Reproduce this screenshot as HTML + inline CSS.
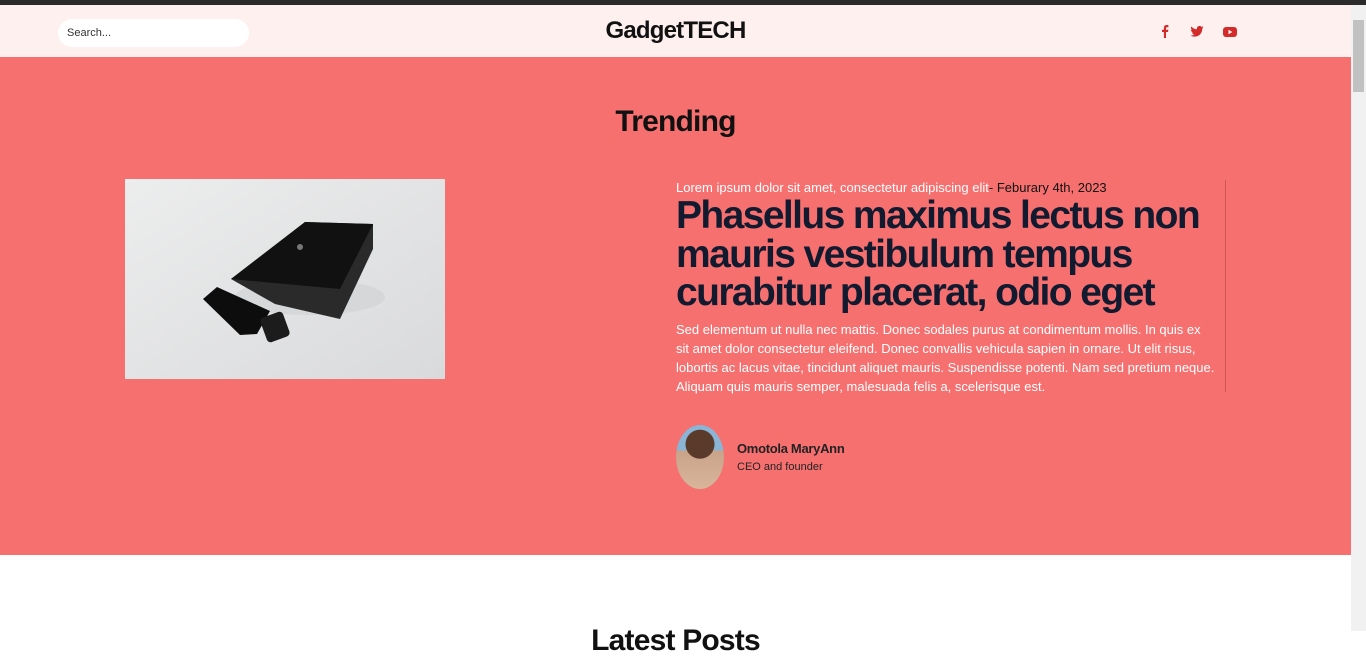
<!DOCTYPE html>
<html><head><meta charset="utf-8"><style>
*{margin:0;padding:0;box-sizing:border-box}
html,body{width:1366px;height:631px;overflow:hidden;background:#fff;font-family:"Liberation Sans",sans-serif}
.top{position:absolute;left:0;top:0;width:1366px;height:5px;background:#2b2b2b}
.hdr{position:absolute;left:0;top:5px;width:1351px;height:52px;background:#fff0f0}
.search{position:absolute;left:58px;top:14px;width:191px;height:28px;background:#fff;border-radius:14px;font-size:11px;color:#333;padding:8px 0 0 9px}
.logo{position:absolute;left:0;width:1351px;top:12px;text-align:center;font-size:24px;font-weight:bold;color:#111;letter-spacing:-0.8px}
.ic{position:absolute;top:20px}
.main{position:absolute;left:0;top:57px;width:1351px;height:498px;background:#f77070}
.tr{position:absolute;top:48px;width:1351px;text-align:center;font-size:30px;font-weight:bold;color:#111;letter-spacing:-0.8px}
.img{position:absolute;left:125px;top:122px;width:320px;height:200px}
.txt{position:absolute;left:676px;top:123px;width:550px;border-right:1px solid #c55;height:212px;white-space:nowrap}
.meta{font-size:13px;color:#fff;letter-spacing:0}
.meta span{color:#111}
h1{font-size:39px;line-height:38.5px;color:#111a2e;letter-spacing:-1.6px;margin-top:2px;font-weight:bold}
p{font-size:13px;line-height:19px;color:#fff;margin-top:7px;letter-spacing:0}
.av{position:absolute;left:676px;top:368px;width:48px;height:64px;border-radius:50%;background:radial-gradient(circle at 50% 30%,#5a3a2a 0 28%,transparent 29%),linear-gradient(#8ab5d6 0 40%,#c9a28a 40%,#d8b69a)}
.nm{position:absolute;left:737px;top:384px;font-size:13px;font-weight:bold;color:#222;letter-spacing:-0.3px}
.rl{position:absolute;left:737px;top:404px;font-size:11px;color:#222}
.sb{position:absolute;left:1351px;top:5px;width:15px;height:626px;background:#f1f1f1}
.th{position:absolute;left:1353px;top:20px;width:11px;height:72px;background:#c1c1c1}
.lp{position:absolute;top:624px;width:1351px;text-align:center;font-size:30px;font-weight:bold;color:#111;letter-spacing:-0.8px}
</style></head><body>
<div class="top"></div>
<div class="hdr">
<div class="search">Search...</div>
<div class="logo">GadgetTECH</div>
<svg class="ic" style="left:1161px" width="8" height="13" viewBox="0 0 8 13"><path d="M5 13V7h2l.4-2.3H5V3.3c0-.6.2-1 1-1h1.4V.2C7 .1 6.4 0 5.7 0 4 0 2.9 1 2.9 2.9v1.8H1V7h1.9v6z" fill="#d32a2a"/></svg>
<svg class="ic" style="left:1190px;top:21px" width="14" height="11" viewBox="0 0 24 20"><path d="M24 2.4a10 10 0 0 1-2.8.8A5 5 0 0 0 23.3.4a10 10 0 0 1-3.1 1.2A4.9 4.9 0 0 0 11.8 6 14 14 0 0 1 1.7.9a4.9 4.9 0 0 0 1.5 6.6A4.9 4.9 0 0 1 1 6.9a4.9 4.9 0 0 0 3.900 4.8 5 5 0 0 1-2.2.1 4.9 4.9 0 0 0 4.6 3.4A9.9 9.9 0 0 1 0 17.2 14 14 0 0 0 7.5 19.4c9.1 0 14-7.5 14-14v-.6A10 10 0 0 0 24 2.4z" fill="#d32a2a"/></svg>
<svg class="ic" style="left:1223px;top:22px" width="14" height="10" viewBox="0 0 14 10"><rect width="14" height="10" rx="3" fill="#d32a2a"/><path d="M5.5 2.8v4.4L9.3 5z" fill="#fff"/></svg>
</div>
<div class="main">
<div class="tr">Trending</div>
<svg class="img" viewBox="0 0 320 200"><defs><linearGradient id="g" x1="0" y1="0" x2="1" y2="1"><stop offset="0" stop-color="#eceded"/><stop offset="1" stop-color="#d9dadc"/></linearGradient></defs>
<rect width="320" height="200" fill="url(#g)"/>
<ellipse cx="185" cy="118" rx="75" ry="18" fill="#cfd0d2" opacity=".6"/>
<polygon points="180,43 248,45 248,70 215,140 150,125 106,100" fill="#2a2a2a"/>
<polygon points="180,43 248,45 215,110 106,100" fill="#111"/>
<circle cx="175" cy="68" r="3" fill="#777"/>
<polygon points="78,120 92,108 145,132 132,155 115,156" fill="#0d0d0d"/>
<rect x="138" y="135" width="24" height="26" rx="4" transform="rotate(-20 150 148)" fill="#1c1c1c"/>
</svg>
<div class="txt">
<div class="meta">Lorem ipsum dolor sit amet, consectetur adipiscing elit<span>- Feburary 4th, 2023</span></div>
<h1>Phasellus maximus lectus non<br>mauris vestibulum tempus<br>curabitur placerat, odio eget</h1>
<p>Sed elementum ut nulla nec mattis. Donec sodales purus at condimentum mollis. In quis ex<br>sit amet dolor consectetur eleifend. Donec convallis vehicula sapien in ornare. Ut elit risus,<br>lobortis ac lacus vitae, tincidunt aliquet mauris. Suspendisse potenti. Nam sed pretium neque.<br>Aliquam quis mauris semper, malesuada felis a, scelerisque est.</p>
</div>
<div class="av"></div>
<div class="nm">Omotola MaryAnn</div>
<div class="rl">CEO and founder</div>
</div>
<div class="lp">Latest Posts</div>
<div class="sb"></div><div class="th"></div>
</body></html>
